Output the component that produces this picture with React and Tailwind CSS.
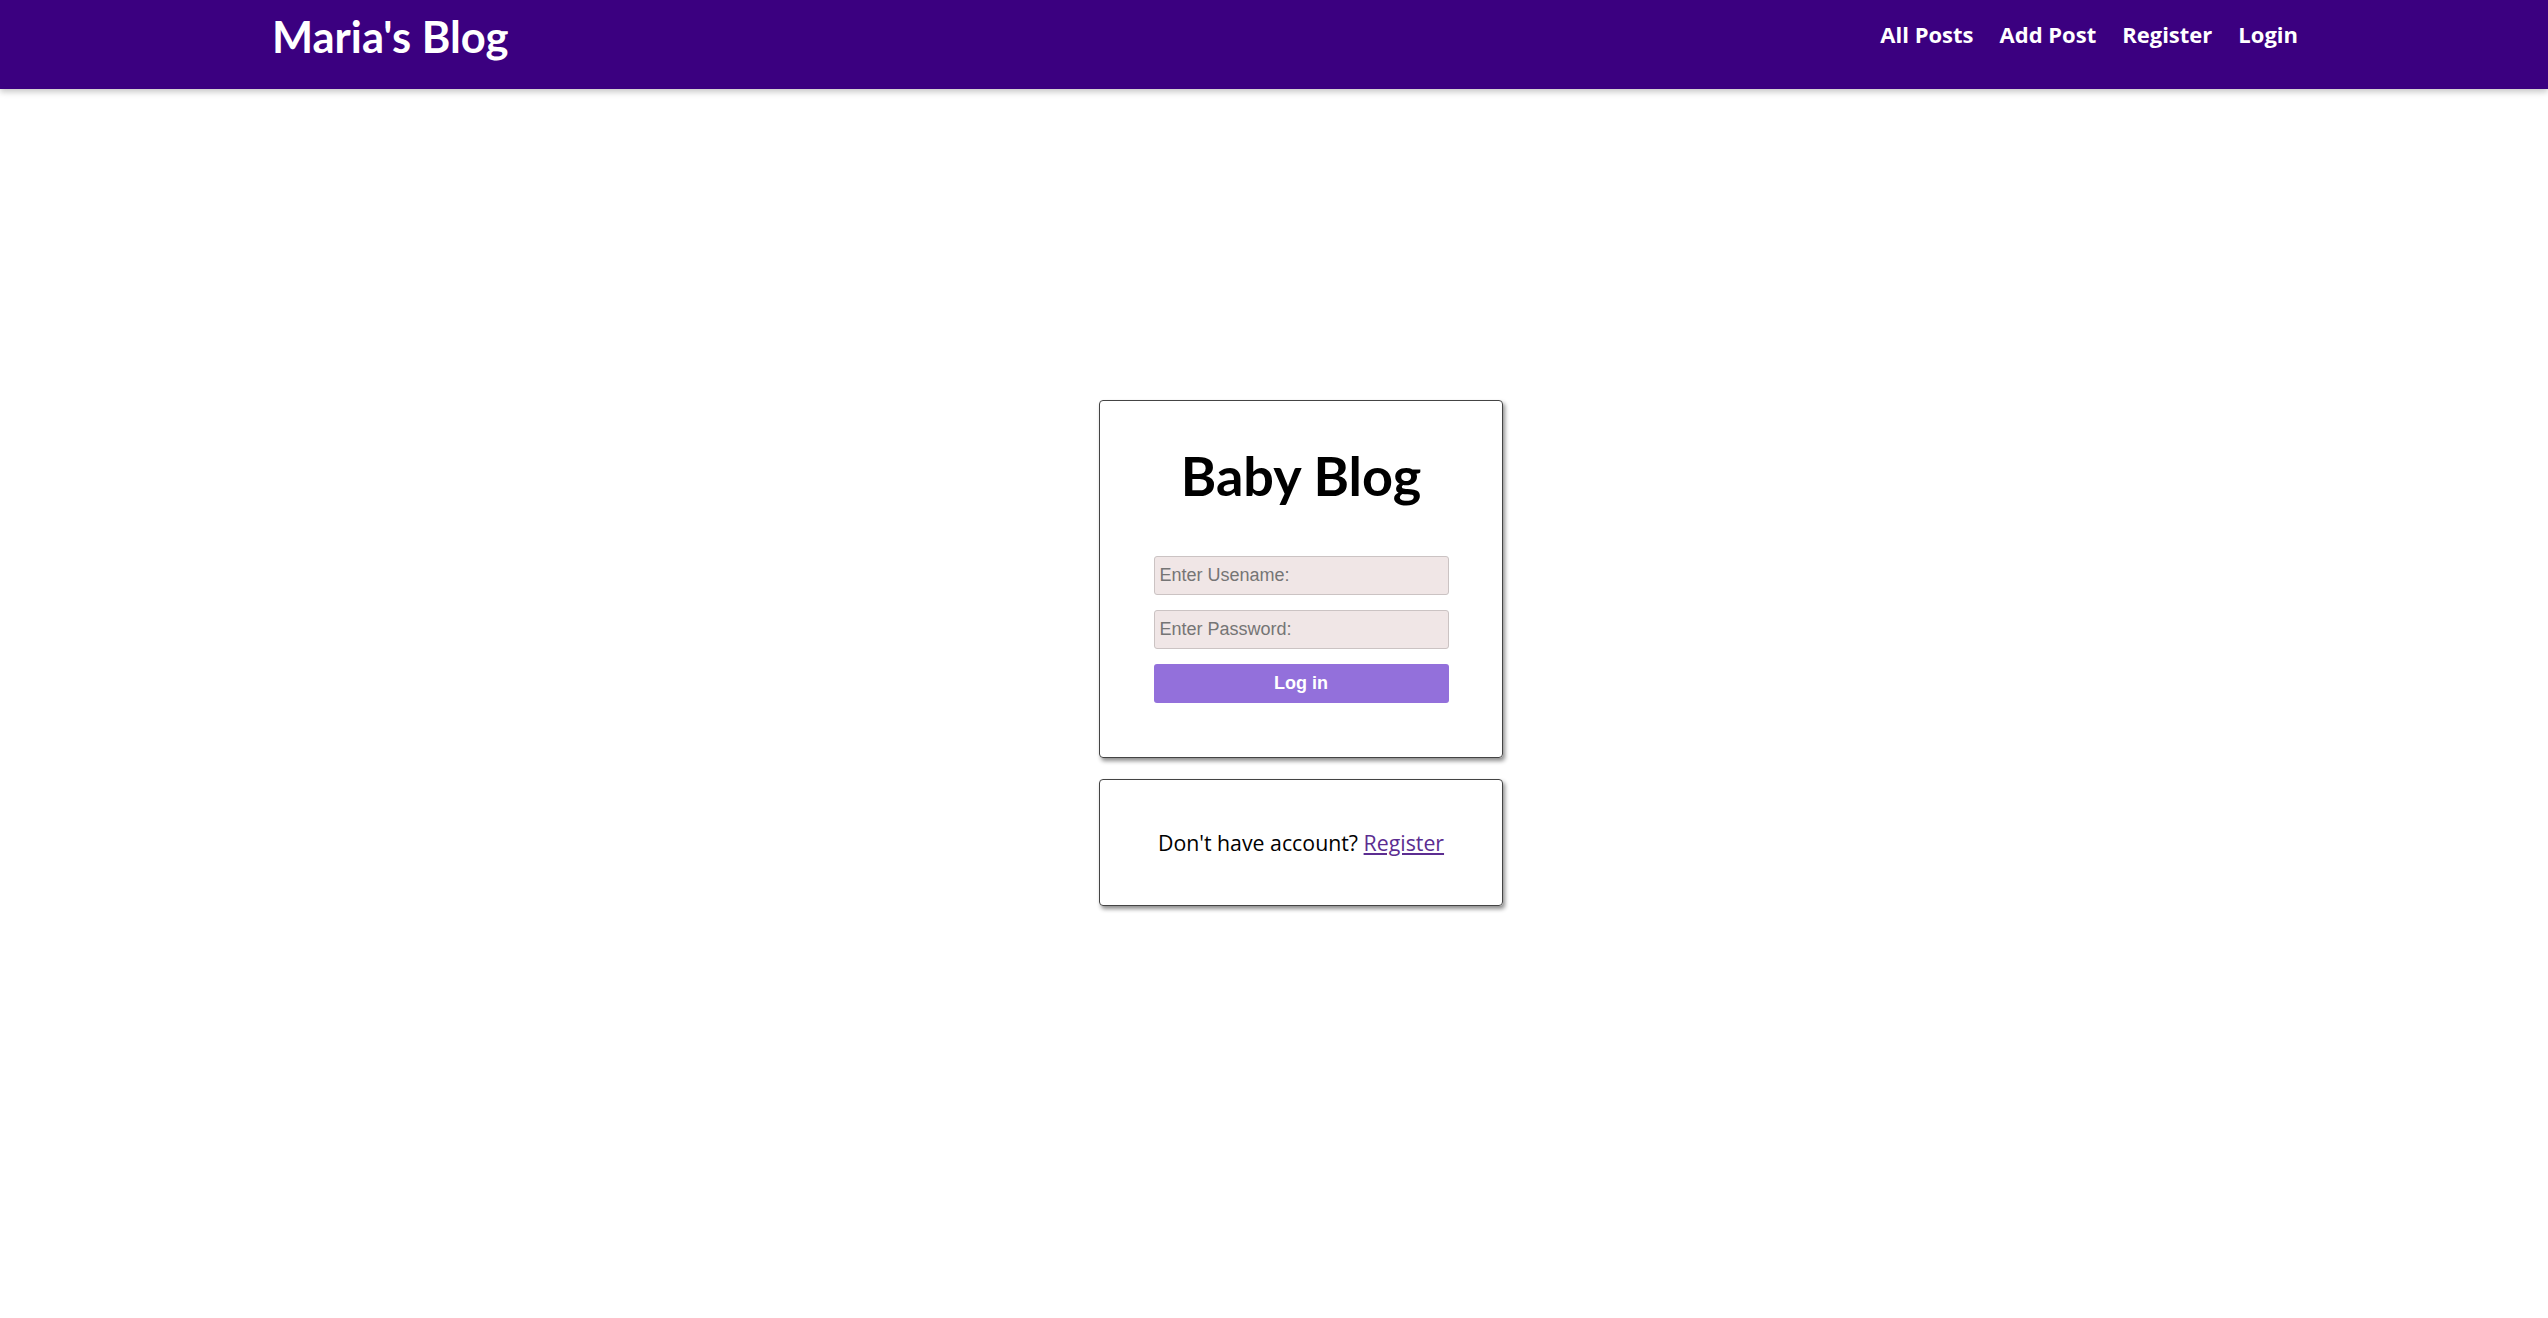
import React from 'react';

const navLinks = ['All Posts', 'Add Post', 'Register', 'Login'];

const inputClass =
  "h-[39px] w-full rounded-[3px] border border-[#cbc3c3] bg-[#f0e6e6] px-[5px] text-[18px] font-['Liberation_Sans',Arial,sans-serif] placeholder:text-[#757575] outline-none";

const App = () => {
  return (
    <div className="min-h-screen bg-white">
      {/* Header */}
      <header className="h-[89px] bg-[#3b0080] shadow-[0_3px_6px_rgba(0,0,0,0.22)] pl-[272px] pr-[250px] flex items-start justify-between">
        <h1 className="pt-[6px] text-[43.5px] font-bold leading-[60px] text-white font-['Lato',sans-serif]">
          Maria's Blog
        </h1>
        <nav className="pt-[18px] flex items-center gap-[26px]">
          {navLinks.map((link) => (
            <a
              key={link}
              href="#"
              className="text-[22px] font-bold leading-[32px] text-white font-['Open_Sans',sans-serif]"
            >
              {link}
            </a>
          ))}
        </nav>
      </header>

      {/* Login */}
      <main className="flex flex-col items-center pt-[311px] pl-[54px]">
        <div className="w-[404px] h-[358px] border border-[#444] rounded-[4px] shadow-[2px_3px_4px_rgba(0,0,0,0.45)] flex flex-col items-center">
          <h2 className="mt-[40px] text-[54px] font-bold leading-[70px] text-black font-['Lato',sans-serif]">
            Baby Blog
          </h2>
          <form className="mt-[45px] w-[295px] flex flex-col gap-[15px]">
            <input type="text" placeholder="Enter Usename:" className={inputClass} />
            <input type="password" placeholder="Enter Password:" className={inputClass} />
            <button
              type="button"
              className="h-[39px] w-full rounded-[3px] bg-[#9370db] text-[18px] font-bold text-white font-['Liberation_Sans',Arial,sans-serif]"
            >
              Log in
            </button>
          </form>
        </div>

        <div className="mt-[21px] w-[404px] h-[127px] border border-[#444] rounded-[4px] shadow-[2px_3px_4px_rgba(0,0,0,0.45)] flex items-center justify-center">
          <p className="text-[21.3px] text-black font-['Open_Sans',sans-serif]">
            Don't have account?{' '}
            <a href="#" className="text-[#5c2d91] underline">
              Register
            </a>
          </p>
        </div>
      </main>
    </div>
  );
};

export default App;
